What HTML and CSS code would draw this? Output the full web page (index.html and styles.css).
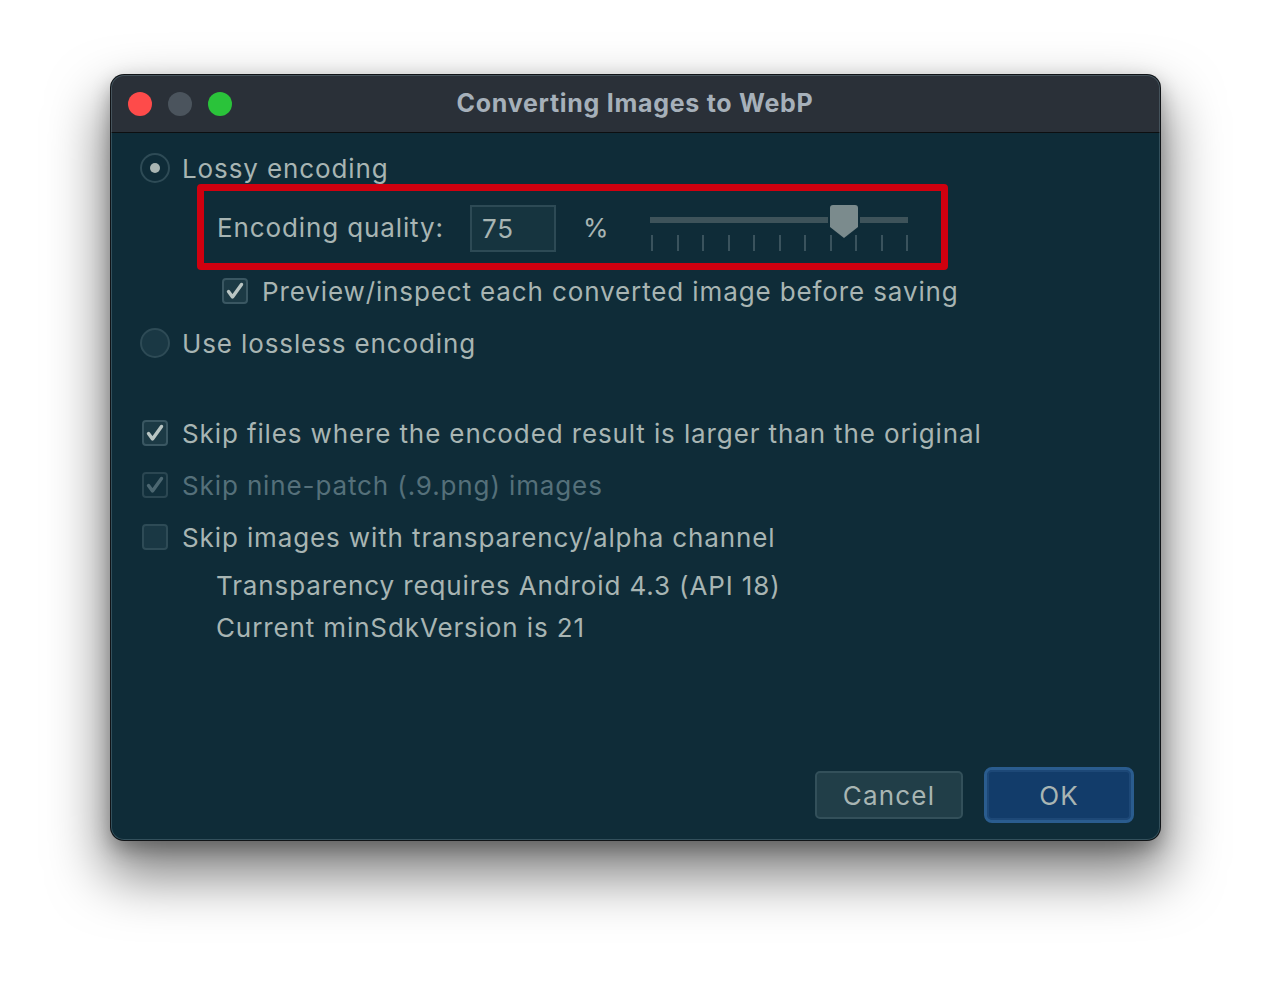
FILE: index.html
```html
<!DOCTYPE html>
<html>
<head>
<meta charset="utf-8">
<link rel="stylesheet" href="styles.css">
</head>
<body>
<div class="window">
  <div class="titlebar">
    <div class="lights">
      <span class="light red"></span>
      <span class="light gray"></span>
      <span class="light green"></span>
    </div>
    <div class="title">Converting Images to WebP</div>
  </div>
  <div class="content">
    <div class="row r-lossy">
      <span class="radio selected"><span class="dot"></span></span>
      <span class="label">Lossy encoding</span>
    </div>
    <div class="highlight">
      <span class="label q-label">Encoding quality:</span>
      <span class="input">75</span>
      <span class="label pct">%</span>
      <div class="slider">
        <div class="track"></div>
        <div class="ticks">
          <i></i><i></i><i></i><i></i><i></i><i></i><i></i><i></i><i></i><i></i><i></i>
        </div>
        <svg class="thumb" width="28" height="33" viewBox="0 0 28 33">
          <path d="M3 0 H25 A3 3 0 0 1 28 3 V22 L14 33 L0 22 V3 A3 3 0 0 1 3 0Z" fill="#7b8b8d" stroke="#0f2c38" stroke-width="4" paint-order="stroke"/>
        </svg>
      </div>
    </div>
    <div class="row r-preview">
      <span class="check on"><svg width="26" height="26" viewBox="0 0 26 26"><path d="M6.5 13.5 L10.5 19 L19.5 6.5" fill="none" stroke="#b9c5c3" stroke-width="3.4" stroke-linecap="round" stroke-linejoin="round"/></svg></span>
      <span class="label">Preview/inspect each converted image before saving</span>
    </div>
    <div class="row r-lossless">
      <span class="radio"></span>
      <span class="label">Use lossless encoding</span>
    </div>
    <div class="row r-skip1">
      <span class="check on"><svg width="26" height="26" viewBox="0 0 26 26"><path d="M6.5 13.5 L10.5 19 L19.5 6.5" fill="none" stroke="#b9c5c3" stroke-width="3.4" stroke-linecap="round" stroke-linejoin="round"/></svg></span>
      <span class="label">Skip files where the encoded result is larger than the original</span>
    </div>
    <div class="row r-skip2 disabled">
      <span class="check dis"><svg width="26" height="26" viewBox="0 0 26 26"><path d="M6.5 13.5 L10.5 19 L19.5 6.5" fill="none" stroke="#4c6771" stroke-width="3.4" stroke-linecap="round" stroke-linejoin="round"/></svg></span>
      <span class="label">Skip nine-patch (.9.png) images</span>
    </div>
    <div class="row r-skip3">
      <span class="check"></span>
      <span class="label">Skip images with transparency/alpha channel</span>
    </div>
    <div class="row note r-note1">
      <span class="label">Transparency requires Android 4.3 (API 18)</span>
    </div>
    <div class="row note r-note2">
      <span class="label">Current minSdkVersion is 21</span>
    </div>
    <div class="buttons">
      <button class="btn cancel">Cancel</button>
      <button class="btn ok">OK</button>
    </div>
  </div>
</div>
</body>
</html>
```

FILE: styles.css
```css
html, body {
  margin: 0;
  padding: 0;
  background: #ffffff;
}
body {
  padding: 75px 0 0 111px;
  min-height: 988px;
  box-sizing: border-box;
  font-family: "Inter", "Liberation Sans", sans-serif;
}
.window {
  position: relative;
  width: 1049px;
  height: 765px;
  box-sizing: border-box;
  border-radius: 13px;
  overflow: hidden;
  background: #0f2c38;
  display: flex;
  flex-direction: column;
  box-shadow: 0 0 0 1px #111417, 0 30px 55px 6px rgba(0,0,0,0.5), 0 8px 20px rgba(0,0,0,0.3);
}
.window::after {
  content: "";
  position: absolute;
  inset: 0;
  border-radius: 13px;
  box-shadow: inset 0 0 0 1px rgba(120,150,160,0.35);
  pointer-events: none;
}
.titlebar {
  height: 57px;
  flex: none;
  background: #2a3038;
  border-bottom: 1px solid #0d0f11;
  display: flex;
  align-items: center;
  position: relative;
}
.lights {
  display: flex;
  gap: 16px;
  padding-left: 17px;
}
.light {
  width: 24px;
  height: 24px;
  border-radius: 50%;
  display: block;
}
.red { background: #fe4b4a; }
.gray { background: #4b545d; }
.green { background: #2ac33a; }
.title {
  position: absolute;
  left: 0;
  right: 0;
  top: 0;
  bottom: 0;
  display: flex;
  align-items: center;
  justify-content: center;
  padding-right: 1px;
  color: #a6b0ba;
  font-weight: 700;
  font-size: 25px;
  letter-spacing: 0.72px;
  padding-bottom: 1px;
}
.content {
  flex: 1;
  display: flex;
  flex-direction: column;
  padding: 19px 26px 17px 29px;
}
.label {
  color: #a8b5b3;
  font-size: 26px;
  letter-spacing: 0.88px;
  white-space: nowrap;
}
.row {
  height: 34px;
  display: flex;
  align-items: center;
  gap: 14px;
  flex: none;
}
.r-lossy { height: 32px; gap: 12px; }
.r-lossless { gap: 12px; }
.r-preview { margin-top: 4px; padding-left: 82px; }
.r-lossless { margin-top: 18px; }
.r-skip1 { margin-top: 56px; padding-left: 2px; }
.r-skip2 { margin-top: 18px; padding-left: 2px; }
.r-skip3 { margin-top: 18px; padding-left: 2px; }
.r-note1 { margin-top: 14px; padding-left: 76px; }
.r-note2 { margin-top: 8px; padding-left: 76px; }
.disabled .label { color: #55707a; }

.radio {
  width: 30px;
  height: 30px;
  box-sizing: border-box;
  border-radius: 50%;
  border: 2px solid #2e4b56;
  background: #1a3844;
  display: flex;
  align-items: center;
  justify-content: center;
  flex: none;
}
.radio.selected { background: #0f2c38; }
.dot {
  width: 10px;
  height: 10px;
  border-radius: 50%;
  background: #a9b5b3;
}
.check {
  width: 26px;
  height: 26px;
  box-sizing: border-box;
  border-radius: 4px;
  border: 2px solid #2e4b56;
  background: #1a3844;
  flex: none;
}
.check svg {
  display: block;
  margin: -2px;
}
.check.on { border-color: #3a5762; background: #1c3a45; }
.check.dis { border-color: #2b4752; background: #12303c; }

.highlight {
  margin-left: 57px;
  width: 751px;
  height: 86px;
  box-sizing: border-box;
  border: 7px solid #d0000f;
  border-radius: 4px;
  display: flex;
  align-items: center;
  padding-left: 13px;
  flex: none;
}
.q-label {
  width: 253px;
  flex: none;
}
.input {
  width: 86px;
  height: 47px;
  flex: none;
  box-sizing: border-box;
  border: 2px solid #2d4a55;
  background: #16343f;
  color: #a8b5b3;
  font-size: 26px;
  letter-spacing: 0.88px;
  display: flex;
  align-items: center;
  padding-left: 10px;
  margin-top: 2px;
}
.pct {
  margin-left: 27px;
  width: 67px;
  flex: none;
}
.slider {
  position: relative;
  width: 258px;
  height: 48px;
  margin-top: 2px;
  flex: none;
}
.track {
  position: absolute;
  left: 0;
  right: 0;
  top: 13px;
  height: 6px;
  background: #3e535a;
}
.ticks {
  position: absolute;
  left: 1px;
  right: 0;
  top: 31px;
  height: 16px;
  display: flex;
  justify-content: space-between;
}
.ticks i {
  display: block;
  width: 2px;
  height: 16px;
  background: #3a535d;
}
.thumb {
  position: absolute;
  left: 180px;
  top: 1px;
  overflow: visible;
}
.buttons {
  margin-top: auto;
  display: flex;
  justify-content: flex-end;
  align-items: center;
  gap: 21px;
}
.btn {
  font-family: "Inter", "Liberation Sans", sans-serif;
  font-size: 26px;
  letter-spacing: 1.2px;
  color: #a8b5b3;
  border-radius: 5px;
  box-sizing: border-box;
  padding: 0;
  cursor: default;
}
.cancel {
  width: 148px;
  height: 48px;
  background: #213e48;
  border: 2px solid #33505a;
}
.ok {
  width: 150px;
  height: 56px;
  background: #123c6a;
  border: 3px solid #2a5c8e;
  box-shadow: inset 0 0 0 2px #1d4877;
  border-radius: 8px;
}
```
